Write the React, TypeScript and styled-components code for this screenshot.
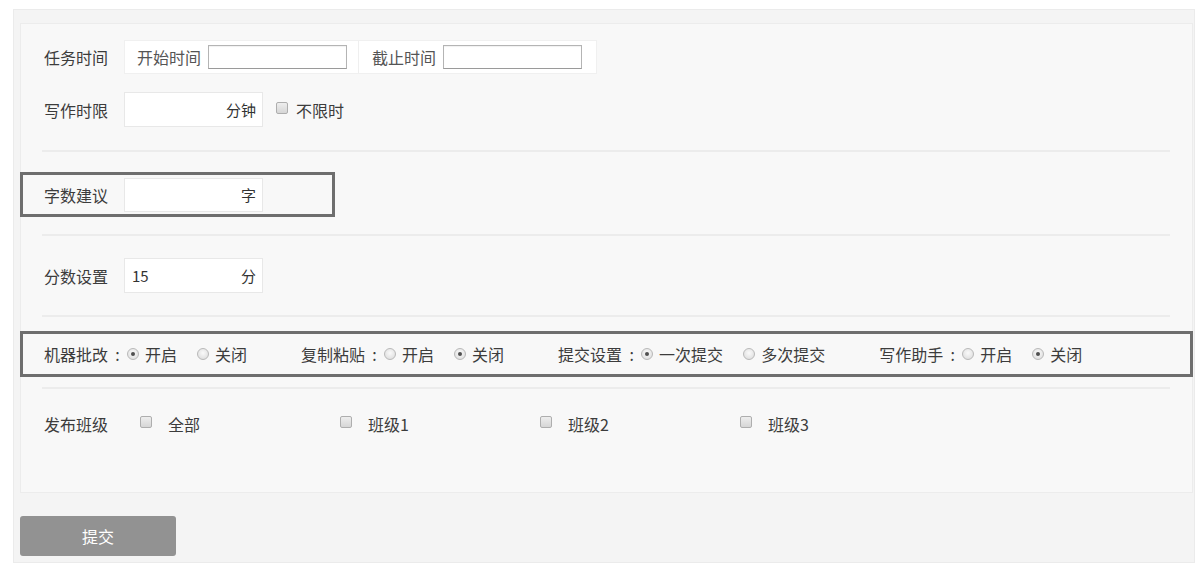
import React from 'react';
import styled, { createGlobalStyle } from 'styled-components';

const GlobalStyle = createGlobalStyle`
  * { box-sizing: border-box; }
  body {
    margin: 0;
    background: #ffffff;
    font-family: "Noto Sans CJK SC", "Liberation Sans", sans-serif;
    font-size: 16px;
    color: #3c3c3c;
  }
`;

const Outer = styled.div`
  margin: 9px 0 0 13px;
  width: 1182px;
  height: 554px;
  background: #f4f4f4;
  border: 1px solid #ebebeb;
  padding: 13px 1px 0 6px;
`;

const Inner = styled.div`
  height: 470px;
  background: #f8f8f8;
  border: 1px solid #ececec;
  padding-top: 16px;
`;

const Row = styled.div<{ $top: number; $h: number }>`
  display: flex;
  align-items: center;
  margin-top: ${p => p.$top}px;
  height: ${p => p.$h}px;
  padding-left: 23px;
`;

const BoxRow = styled.div<{ $top: number; $h: number; $w?: number }>`
  display: flex;
  align-items: center;
  margin: ${p => p.$top}px 0 0 -1px;
  height: ${p => p.$h}px;
  width: ${p => (p.$w ? `${p.$w}px` : 'calc(100% + 2px)')};
  border: 3px solid #6e6e6e;
  padding-left: 21px;
`;

const Label = styled.span<{ $w?: number }>`
  width: ${p => p.$w ?? 80}px;
  flex-shrink: 0;
  white-space: nowrap;
`;

const Divider = styled.div<{ $top: number }>`
  margin: ${p => p.$top}px 22px 0 21px;
  height: 2px;
  background: #ececec;
`;

const TimeBox = styled.div`
  display: flex;
  align-items: center;
  height: 34px;
  background: #ffffff;
  border: 1px solid #f0f0f0;
`;

const TimeSeg = styled.div<{ $first?: boolean }>`
  display: flex;
  align-items: center;
  height: 100%;
  padding: ${p => (p.$first ? '0 11px 0 12px' : '0 14px 0 13px')};
  border-left: ${p => (p.$first ? 'none' : '1px solid #efefef')};
  font-size: 16px;
  color: #555;
`;

const TimeInput = styled.input`
  margin-left: 7px;
  width: 139px;
  height: 24px;
  border: 1px solid #b4b4b4;
  border-bottom-color: #9a9a9a;
  box-shadow: inset 0 1px 1px rgba(0, 0, 0, 0.06);
  background: #fff;
  outline: none;
`;

const UnitBox = styled.div<{ $h: number }>`
  display: flex;
  align-items: center;
  justify-content: space-between;
  width: 139px;
  height: ${p => p.$h}px;
  background: #ffffff;
  border: 1px solid #e8e8e8;
  padding: 0 6px 0 7px;
  font-size: 15px;
  color: #333;
`;

const Check = styled.span<{ $ml?: number; $mr?: number }>`
  display: inline-block;
  flex-shrink: 0;
  width: 12px;
  height: 12px;
  margin: -4px ${p => p.$mr ?? 8}px 0 ${p => p.$ml ?? 0}px;
  border: 1px solid #aeaeae;
  border-radius: 2px;
  background: linear-gradient(#eeeeee, #d6d6d6);
`;

const Radio = styled.span<{ $on?: boolean }>`
  position: relative;
  display: inline-block;
  flex-shrink: 0;
  width: 12px;
  height: 12px;
  margin-right: 6px;
  border-radius: 50%;
  border: 1px solid #b9b9b9;
  background: radial-gradient(circle at 50% 40%, #fafafa, #d9d9d9);
  &::after {
    content: '';
    display: ${p => (p.$on ? 'block' : 'none')};
    position: absolute;
    left: 3px;
    top: 3px;
    width: 4px;
    height: 4px;
    border-radius: 50%;
    background: #4f4f4f;
  }
`;

const Group = styled.div`
  display: flex;
  align-items: center;
  margin-right: 34px;
`;

const Colon = styled.span`
  width: 19px;
  text-align: center;
`;

const Option = styled.span`
  margin-right: 20px;
  white-space: nowrap;
`;

const ClassOption = styled.div`
  display: flex;
  align-items: center;
  width: 200px;
`;

const PlainText = styled.span`
  white-space: nowrap;
`;

const SubmitButton = styled.button`
  display: block;
  margin-top: 23px;
  width: 156px;
  height: 40px;
  border: none;
  border-radius: 3px;
  background: #929292;
  color: #ffffff;
  font-family: inherit;
  font-size: 16px;
`;

const switches = [
  { label: '机器批改', options: ['开启', '关闭'], on: 0 },
  { label: '复制粘贴', options: ['开启', '关闭'], on: 1 },
  { label: '提交设置', options: ['一次提交', '多次提交'], on: 0 },
  { label: '写作助手', options: ['开启', '关闭'], on: 1 },
];

const classes = ['全部', '班级1', '班级2', '班级3'];

export default function App() {
  return (
    <>
      <GlobalStyle />
      <Outer>
        <Inner>
          <Row $top={0} $h={34}>
            <Label>任务时间</Label>
            <TimeBox>
              <TimeSeg $first>
                开始时间
                <TimeInput type="text" />
              </TimeSeg>
              <TimeSeg>
                截止时间
                <TimeInput type="text" />
              </TimeSeg>
            </TimeBox>
          </Row>
          <Row $top={18} $h={35}>
            <Label>写作时限</Label>
            <UnitBox $h={35}>
              <span />
              <span>分钟</span>
            </UnitBox>
            <Check $ml={13} $mr={8} />
            <PlainText>不限时</PlainText>
          </Row>
          <Divider $top={23} />
          <BoxRow $top={20} $h={45} $w={315}>
            <Label>字数建议</Label>
            <UnitBox $h={34}>
              <span />
              <span>字</span>
            </UnitBox>
          </BoxRow>
          <Divider $top={17} />
          <Row $top={22} $h={35}>
            <Label>分数设置</Label>
            <UnitBox $h={35}>
              <span>15</span>
              <span>分</span>
            </UnitBox>
          </Row>
          <Divider $top={22} />
          <BoxRow $top={14} $h={46}>
            {switches.map(s => (
              <Group key={s.label}>
                <PlainText>{s.label}</PlainText>
                <Colon>:</Colon>
                {s.options.map((o, i) => (
                  <React.Fragment key={o}>
                    <Radio $on={i === s.on} />
                    <Option>{o}</Option>
                  </React.Fragment>
                ))}
              </Group>
            ))}
          </BoxRow>
          <Divider $top={10} />
          <Row $top={18} $h={34}>
            <Label $w={96}>发布班级</Label>
            {classes.map(c => (
              <ClassOption key={c}>
                <Check $mr={16} />
                <PlainText>{c}</PlainText>
              </ClassOption>
            ))}
          </Row>
        </Inner>
        <SubmitButton>提交</SubmitButton>
      </Outer>
    </>
  );
}
